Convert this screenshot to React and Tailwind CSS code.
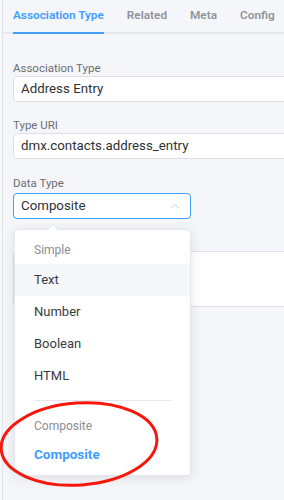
import { ChevronUp } from "lucide-react";

const font = { fontFamily: "Roboto, 'Liberation Sans', sans-serif" };

function Field({ label, children, className = "" }) {
  return (
    <div className={className}>
      <div className="h-[15px] text-[11.5px] leading-[15px] text-[#6b6e75]">{label}</div>
      {children}
    </div>
  );
}

function TextInput({ value }) {
  return (
    <div className="flex h-[26px] w-[330px] items-center rounded-[4px] border border-[#dcdfe6] bg-white px-[7px] text-[13.3px] text-[#303133]">
      {value}
    </div>
  );
}

function Option({ children, active, selected }) {
  return (
    <div
      className={
        "flex h-[32px] items-center px-[19px] " +
        (active ? "bg-[#f5f7fa] " : "") +
        (selected ? "text-[13.5px] font-bold text-[#409eff]" : "text-[13px] text-[#3a3c40]")
      }
    >
      {children}
    </div>
  );
}

function GroupTitle({ children }) {
  return (
    <div className="flex h-[28px] items-center px-[19px] text-[12px] text-[#8b8e94]">{children}</div>
  );
}

export default function App() {
  return (
    <div
      className="relative flex h-[500px] w-[284px] overflow-hidden bg-[#f5f6fa] antialiased"
      style={font}
    >
      <div className="w-[2px] shrink-0 bg-[#f7f8fa]" />
      <div className="relative w-[360px] shrink-0 border-l border-[#e1e3e8]">
        {/* tabs */}
        <div className="flex h-[34px] items-stretch border-b-2 border-[#e4e7ed] pl-[10px] text-[11.8px] font-semibold">
          <div className="relative -mb-[2px] flex items-center border-b-2 border-[#409eff] text-[#409eff]">
            Association Type
          </div>
          <div className="ml-[23px] flex items-center text-[#909399]">Related</div>
          <div className="ml-[23px] flex items-center text-[#909399]">Meta</div>
          <div className="ml-[23px] flex items-center text-[#909399]">Config</div>
        </div>

        <div className="px-[10px] pt-[27px]">
          <Field label="Association Type" className="mb-[16px]">
            <TextInput value="Address Entry" />
          </Field>
          <Field label="Type URI" className="mb-[17px]">
            <TextInput value="dmx.contacts.address_entry" />
          </Field>
          <Field label="Data Type">
            <div className="mt-[2px] flex h-[26px] w-[178px] items-center justify-between rounded-[4px] border border-[#409eff] bg-white pl-[7px] pr-[8px] text-[13.3px] text-[#303133]">
              <span>Composite</span>
              <ChevronUp className="h-[14px] w-[14px] text-[#c0c4cc]" strokeWidth={1.5} />
            </div>
          </Field>
          <div className="mt-[32px] h-[56px] w-[330px] rounded-[4px] border border-[#dcdfe6] bg-white" />
        </div>

        {/* dropdown */}
        <div className="absolute left-[11px] top-[229px] w-[177px] rounded-[4px] border border-[#e4e7ed] bg-white pb-[5px] pt-[6px] shadow-[0_2px_12px_rgba(0,0,0,0.1)]">
          <div className="absolute -top-[6px] left-[32px] h-0 w-0 border-x-[6px] border-b-[6px] border-x-transparent border-b-[#e4e7ed]" />
          <div className="absolute -top-[5px] left-[33px] h-0 w-0 border-x-[5px] border-b-[5px] border-x-transparent border-b-white" />
          <GroupTitle>Simple</GroupTitle>
          <Option active>Text</Option>
          <Option>Number</Option>
          <Option>Boolean</Option>
          <Option>HTML</Option>
          <div className="mx-[19px] mb-[11px] mt-[8px] h-px bg-[#e4e7ed]" />
          <GroupTitle>Composite</GroupTitle>
          <div className="-mt-[2px]">
            <Option selected>Composite</Option>
          </div>
        </div>
      </div>

      {/* annotation */}
      <svg className="pointer-events-none absolute left-0 top-0" width="284" height="500">
        <ellipse
          cx="79"
          cy="444"
          rx="78"
          ry="41"
          fill="none"
          stroke="#f8170c"
          strokeWidth="3"
          transform="rotate(-4 79 444)"
        />
      </svg>
    </div>
  );
}
